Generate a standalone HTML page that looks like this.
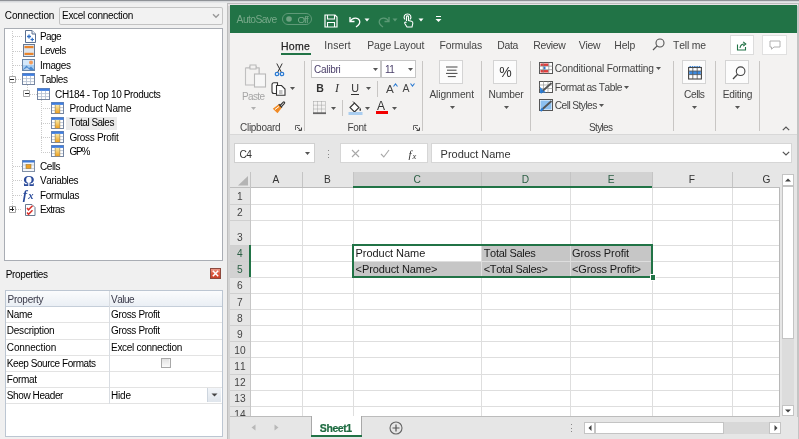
<!DOCTYPE html><html><head><meta charset="utf-8"><style>
html,body{margin:0;padding:0;width:799px;height:439px;overflow:hidden;background:#f0f0f0}
#root{position:absolute;left:0;top:0;width:799px;height:439px;overflow:hidden;filter:blur(0.3px);}
#root>div,#root>svg{position:absolute;box-sizing:border-box}
.t{white-space:pre;line-height:1;font-family:"Liberation Sans",sans-serif;font-kerning:none}
svg{overflow:visible}
</style></head><body><div id="root">
<div style="left:0.00px;top:0.00px;width:227.00px;height:439.00px;background:#f0f0f0;"></div>
<div style="left:0.00px;top:0.00px;width:799.00px;height:1.00px;background:#8f9297;"></div>
<div style="left:0.00px;top:1.00px;width:799.00px;height:1.00px;background:#d6d8db;"></div>
<div style="left:0.00px;top:2.00px;width:799.00px;height:1.00px;background:#e4e5e7;"></div>
<div class="t" style="left:4.80px;top:11.00px;font-size:10.000px;color:#000;letter-spacing:-0.109px;">Connection</div>
<div style="left:58.50px;top:6.50px;width:164.00px;height:18.00px;background:#f2f2f2;box-shadow:inset 0 0 0 1px #c3c3c3;border-radius:2px;"></div>
<div class="t" style="left:62.00px;top:11.00px;font-size:10.000px;color:#000;letter-spacing:-0.288px;">Excel connection</div>
<svg style="left:212.00px;top:13.00px;" width="8" height="6" viewBox="0 0 8 6"><path d="M1 1.2 L4 4.2 L7 1.2" fill="none" stroke="#9a9a9a" stroke-width="1.4"/></svg>
<div style="left:4.00px;top:28.00px;width:219.00px;height:233.00px;background:#fff;box-shadow:inset 0 0 0 1px #a9adb4;"></div>
<div style="left:12.00px;top:31.00px;width:1.00px;height:178.24px;background:repeating-linear-gradient(to bottom,#cacaca 0 1px,transparent 1px 2px);"></div>
<div style="left:13.00px;top:36.20px;width:9.00px;height:1.00px;background:repeating-linear-gradient(to right,#cacaca 0 1px,transparent 1px 2px);"></div>
<div style="left:13.00px;top:50.62px;width:9.00px;height:1.00px;background:repeating-linear-gradient(to right,#cacaca 0 1px,transparent 1px 2px);"></div>
<div style="left:13.00px;top:65.04px;width:9.00px;height:1.00px;background:repeating-linear-gradient(to right,#cacaca 0 1px,transparent 1px 2px);"></div>
<div style="left:16.00px;top:79.46px;width:6.00px;height:1.00px;background:repeating-linear-gradient(to right,#cacaca 0 1px,transparent 1px 2px);"></div>
<div style="left:13.00px;top:165.98px;width:9.00px;height:1.00px;background:repeating-linear-gradient(to right,#cacaca 0 1px,transparent 1px 2px);"></div>
<div style="left:13.00px;top:180.40px;width:9.00px;height:1.00px;background:repeating-linear-gradient(to right,#cacaca 0 1px,transparent 1px 2px);"></div>
<div style="left:13.00px;top:194.82px;width:9.00px;height:1.00px;background:repeating-linear-gradient(to right,#cacaca 0 1px,transparent 1px 2px);"></div>
<div style="left:16.00px;top:209.24px;width:6.00px;height:1.00px;background:repeating-linear-gradient(to right,#cacaca 0 1px,transparent 1px 2px);"></div>
<div style="left:26.50px;top:85.46px;width:1.00px;height:5.42px;background:repeating-linear-gradient(to bottom,#cacaca 0 1px,transparent 1px 2px);"></div>
<div style="left:30.00px;top:93.88px;width:7.00px;height:1.00px;background:repeating-linear-gradient(to right,#cacaca 0 1px,transparent 1px 2px);"></div>
<div style="left:40.50px;top:99.88px;width:1.00px;height:51.68px;background:repeating-linear-gradient(to bottom,#cacaca 0 1px,transparent 1px 2px);"></div>
<div style="left:41.00px;top:108.30px;width:10.00px;height:1.00px;background:repeating-linear-gradient(to right,#cacaca 0 1px,transparent 1px 2px);"></div>
<div style="left:41.00px;top:122.72px;width:10.00px;height:1.00px;background:repeating-linear-gradient(to right,#cacaca 0 1px,transparent 1px 2px);"></div>
<div style="left:41.00px;top:137.14px;width:10.00px;height:1.00px;background:repeating-linear-gradient(to right,#cacaca 0 1px,transparent 1px 2px);"></div>
<div style="left:41.00px;top:151.56px;width:10.00px;height:1.00px;background:repeating-linear-gradient(to right,#cacaca 0 1px,transparent 1px 2px);"></div>
<div style="left:8.80px;top:75.86px;width:7.20px;height:7.20px;background:#fff;box-shadow:inset 0 0 0 1px #a4a4a4;border-radius:1px;"></div>
<div style="left:10.40px;top:78.96px;width:4.00px;height:1.00px;background:#222;"></div>
<div style="left:23.30px;top:90.28px;width:7.20px;height:7.20px;background:#fff;box-shadow:inset 0 0 0 1px #a4a4a4;border-radius:1px;"></div>
<div style="left:24.90px;top:93.38px;width:4.00px;height:1.00px;background:#222;"></div>
<div style="left:8.80px;top:205.64px;width:7.20px;height:7.20px;background:#fff;box-shadow:inset 0 0 0 1px #a4a4a4;border-radius:1px;"></div>
<div style="left:10.40px;top:208.74px;width:4.00px;height:1.00px;background:#222;"></div>
<div style="left:11.90px;top:207.24px;width:1.00px;height:4.00px;background:#222;"></div>
<svg style="left:23.50px;top:30.00px;" width="12" height="13" viewBox="0 0 12 13"><path d="M1.5 0.5H8L11.5 4V12.5H1.5Z" fill="#fff" stroke="#5d7190"/><path d="M8 0.5V4H11.5" fill="#e8eef6" stroke="#5d7190"/><path d="M3 6.5H7M5 4.5V8.5" stroke="#2f6fc6" stroke-width="1.3"/><path d="M6.5 9.5H10M8.25 7.8V11.2" stroke="#2f6fc6" stroke-width="1.2"/></svg>
<svg style="left:23.00px;top:44.00px;" width="12" height="13" viewBox="0 0 12 13"><rect x="0.5" y="0.5" width="11" height="12" fill="#dde5ee" stroke="#6a7a92"/><rect x="1.5" y="2" width="9" height="2.2" fill="#e8842c"/><rect x="1.5" y="8.8" width="9" height="2.2" fill="#e8842c"/></svg>
<svg style="left:22.00px;top:58.50px;" width="13" height="12" viewBox="0 0 13 12"><rect x="0.5" y="0.5" width="12" height="11" fill="#a8cdf0" stroke="#6a86a8"/><rect x="1" y="1" width="11" height="5" fill="#d4e8fa"/><circle cx="9" cy="3.6" r="2" fill="#f39c5a"/><path d="M1 10.5L4.5 6.5L7 9L9 7.5L12 10.5V11H1Z" fill="#4a8ad0"/><path d="M1 11L5 8.5L8 11Z" fill="#ffffff" opacity="0.6"/></svg>
<svg style="left:22.30px;top:73.46px;" width="13" height="12" viewBox="0 0 13 12"><rect x="0.5" y="0.5" width="12" height="11" fill="#fff" stroke="#7585a0"/><rect x="0.5" y="0.5" width="12" height="2.4" fill="#3f7ee0"/><path d="M1 5.6H12M1 8.6H12M4.5 2.9V11M8.5 2.9V11" stroke="#b8c3d2" stroke-width="0.9"/></svg>
<svg style="left:37.20px;top:87.88px;" width="13" height="12" viewBox="0 0 13 12"><rect x="0.5" y="0.5" width="12" height="11" fill="#fff" stroke="#7585a0"/><rect x="0.5" y="0.5" width="12" height="2.4" fill="#3f7ee0"/><path d="M1 5.6H12M1 8.6H12M4.5 2.9V11M8.5 2.9V11" stroke="#b8c3d2" stroke-width="0.9"/></svg>
<svg style="left:51.00px;top:102.20px;" width="13" height="12" viewBox="0 0 13 12"><rect x="0.5" y="0.5" width="12" height="11" fill="#fff" stroke="#7585a0"/><rect x="0.5" y="0.5" width="12" height="2.4" fill="#3f7ee0"/><path d="M1 5.6H12M1 8.6H12M4.5 2.9V11M8.5 2.9V11" stroke="#b8c3d2" stroke-width="0.9"/><defs><linearGradient id="og" x1="0" y1="0" x2="0" y2="1"><stop offset="0" stop-color="#f8eaa8"/><stop offset="1" stop-color="#f0a01c"/></linearGradient></defs><rect x="4.2" y="2.9" width="4.6" height="8.3" fill="url(#og)"/><path d="M4.2 2.9V11.2M8.8 2.9V11.2" stroke="#a08040" stroke-width="0.6"/></svg>
<svg style="left:51.00px;top:116.62px;" width="13" height="12" viewBox="0 0 13 12"><rect x="0.5" y="0.5" width="12" height="11" fill="#fff" stroke="#7585a0"/><rect x="0.5" y="0.5" width="12" height="2.4" fill="#3f7ee0"/><path d="M1 5.6H12M1 8.6H12M4.5 2.9V11M8.5 2.9V11" stroke="#b8c3d2" stroke-width="0.9"/><defs><linearGradient id="og" x1="0" y1="0" x2="0" y2="1"><stop offset="0" stop-color="#f8eaa8"/><stop offset="1" stop-color="#f0a01c"/></linearGradient></defs><rect x="4.2" y="2.9" width="4.6" height="8.3" fill="url(#og)"/><path d="M4.2 2.9V11.2M8.8 2.9V11.2" stroke="#a08040" stroke-width="0.6"/></svg>
<svg style="left:51.00px;top:131.04px;" width="13" height="12" viewBox="0 0 13 12"><rect x="0.5" y="0.5" width="12" height="11" fill="#fff" stroke="#7585a0"/><rect x="0.5" y="0.5" width="12" height="2.4" fill="#3f7ee0"/><path d="M1 5.6H12M1 8.6H12M4.5 2.9V11M8.5 2.9V11" stroke="#b8c3d2" stroke-width="0.9"/><defs><linearGradient id="og" x1="0" y1="0" x2="0" y2="1"><stop offset="0" stop-color="#f8eaa8"/><stop offset="1" stop-color="#f0a01c"/></linearGradient></defs><rect x="4.2" y="2.9" width="4.6" height="8.3" fill="url(#og)"/><path d="M4.2 2.9V11.2M8.8 2.9V11.2" stroke="#a08040" stroke-width="0.6"/></svg>
<svg style="left:51.00px;top:145.46px;" width="13" height="12" viewBox="0 0 13 12"><rect x="0.5" y="0.5" width="12" height="11" fill="#fff" stroke="#7585a0"/><rect x="0.5" y="0.5" width="12" height="2.4" fill="#3f7ee0"/><path d="M1 5.6H12M1 8.6H12M4.5 2.9V11M8.5 2.9V11" stroke="#b8c3d2" stroke-width="0.9"/><defs><linearGradient id="og" x1="0" y1="0" x2="0" y2="1"><stop offset="0" stop-color="#f8eaa8"/><stop offset="1" stop-color="#f0a01c"/></linearGradient></defs><rect x="4.2" y="2.9" width="4.6" height="8.3" fill="url(#og)"/><path d="M4.2 2.9V11.2M8.8 2.9V11.2" stroke="#a08040" stroke-width="0.6"/></svg>
<svg style="left:22.30px;top:159.98px;" width="13" height="12" viewBox="0 0 13 12"><rect x="0.5" y="0.5" width="12" height="11" fill="#f4f6f9" stroke="#7f8fa6"/><rect x="0.5" y="0.5" width="12" height="2" fill="#3b78d8"/><path d="M1 5H12M1 8.5H12" stroke="#c8d0dc"/><rect x="4" y="4.5" width="5" height="4" fill="#eea023" stroke="#9a7a3a" stroke-width="0.6"/></svg>
<div class="t" style="left:23.20px;top:175.00px;font-size:14.000px;color:#2a4a9a;font-weight:bold;font-family:'Liberation Serif';">Ω</div>
<div class="t" style="left:22.80px;top:188.00px;font-size:13.000px;color:#2a4a9a;font-weight:bold;font-family:'Liberation Serif';font-style:italic;">f</div>
<div class="t" style="left:28.20px;top:191.00px;font-size:10.500px;color:#2a4a9a;font-weight:bold;font-family:'Liberation Serif';font-style:italic;">x</div>
<svg style="left:23.50px;top:203.50px;" width="12" height="12" viewBox="0 0 12 12"><path d="M1.5 0.5H8L11 3.5V11.5H1.5Z" fill="#fff" stroke="#6a7a90"/><path d="M3 4L4.5 5.8L8.5 1.8M3 8.5L4.5 10.3L8.5 6.3" fill="none" stroke="#d8302a" stroke-width="1.5"/></svg>
<div style="left:66.30px;top:116.50px;width:51.00px;height:13.00px;background:#ebebeb;"></div>
<div class="t" style="left:40.00px;top:32.00px;font-size:10.000px;color:#000;letter-spacing:-0.564px;">Page</div>
<div class="t" style="left:40.00px;top:46.00px;font-size:10.000px;color:#000;letter-spacing:-0.551px;">Levels</div>
<div class="t" style="left:40.00px;top:61.00px;font-size:10.000px;color:#000;letter-spacing:-0.365px;">Images</div>
<div class="t" style="left:40.00px;top:75.00px;font-size:10.000px;color:#000;letter-spacing:-0.402px;">Tables</div>
<div class="t" style="left:55.00px;top:90.00px;font-size:10.000px;color:#000;letter-spacing:-0.343px;">CH184 - Top 10 Products</div>
<div class="t" style="left:69.40px;top:104.00px;font-size:10.000px;color:#000;letter-spacing:-0.160px;">Product Name</div>
<div class="t" style="left:69.40px;top:118.00px;font-size:10.000px;color:#000;letter-spacing:-0.502px;">Total Sales</div>
<div class="t" style="left:69.40px;top:133.00px;font-size:10.000px;color:#000;letter-spacing:-0.316px;">Gross Profit</div>
<div class="t" style="left:69.40px;top:147.00px;font-size:10.000px;color:#000;letter-spacing:-1.113px;">GP%</div>
<div class="t" style="left:40.00px;top:162.00px;font-size:10.000px;color:#000;letter-spacing:-0.445px;">Cells</div>
<div class="t" style="left:40.00px;top:176.00px;font-size:10.000px;color:#000;letter-spacing:-0.388px;">Variables</div>
<div class="t" style="left:40.00px;top:191.00px;font-size:10.000px;color:#000;letter-spacing:-0.309px;">Formulas</div>
<div class="t" style="left:40.00px;top:205.00px;font-size:10.000px;color:#000;letter-spacing:-0.690px;">Extras</div>
<div class="t" style="left:5.70px;top:270.00px;font-size:10.000px;color:#000;letter-spacing:-0.358px;">Properties</div>
<svg style="left:210.00px;top:268.00px;" width="11" height="11" viewBox="0 0 11 11"><defs><linearGradient id="rg" x1="0" y1="0" x2="0" y2="1"><stop offset="0" stop-color="#f0a090"/><stop offset="0.5" stop-color="#dc5a40"/><stop offset="1" stop-color="#c83c24"/></linearGradient></defs><rect x="0.5" y="0.5" width="10" height="10" fill="url(#rg)" stroke="#8c4a3e"/><path d="M2.8 2.8L8.2 8.2M8.2 2.8L2.8 8.2" stroke="#fff" stroke-width="1.5"/></svg>
<div style="left:4.50px;top:289.50px;width:218.50px;height:147.00px;background:#fff;box-shadow:inset 0 0 0 1px #bcc6d2;"></div>
<div style="left:5.50px;top:290.50px;width:216.50px;height:16.00px;background:linear-gradient(#fbfcfd,#e9eef4);"></div>
<div style="left:5.50px;top:306.00px;width:216.50px;height:1.00px;background:#c5ced9;"></div>
<div style="left:5.50px;top:322.40px;width:216.50px;height:1.00px;background:#e3e3e3;"></div>
<div style="left:5.50px;top:338.60px;width:216.50px;height:1.00px;background:#e3e3e3;"></div>
<div style="left:5.50px;top:354.70px;width:216.50px;height:1.00px;background:#e3e3e3;"></div>
<div style="left:5.50px;top:370.90px;width:216.50px;height:1.00px;background:#e3e3e3;"></div>
<div style="left:5.50px;top:387.00px;width:216.50px;height:1.00px;background:#e3e3e3;"></div>
<div style="left:5.50px;top:403.20px;width:216.50px;height:1.00px;background:#e3e3e3;"></div>
<div style="left:108.70px;top:290.50px;width:1.00px;height:113.00px;background:#d9dde2;"></div>
<div class="t" style="left:7.50px;top:295.00px;font-size:10.000px;color:#3a3a4a;letter-spacing:-0.249px;">Property</div>
<div class="t" style="left:111.00px;top:295.00px;font-size:10.000px;color:#3a3a4a;letter-spacing:-0.515px;">Value</div>
<div class="t" style="left:6.80px;top:310.00px;font-size:10.000px;color:#000;letter-spacing:-0.294px;">Name</div>
<div class="t" style="left:111.00px;top:310.00px;font-size:10.000px;color:#000;letter-spacing:-0.341px;">Gross Profit</div>
<div class="t" style="left:6.80px;top:326.00px;font-size:10.000px;color:#000;letter-spacing:-0.229px;">Description</div>
<div class="t" style="left:111.00px;top:326.00px;font-size:10.000px;color:#000;letter-spacing:-0.341px;">Gross Profit</div>
<div class="t" style="left:6.80px;top:343.00px;font-size:10.000px;color:#000;letter-spacing:-0.129px;">Connection</div>
<div class="t" style="left:111.00px;top:343.00px;font-size:10.000px;color:#000;letter-spacing:-0.288px;">Excel connection</div>
<div class="t" style="left:6.80px;top:359.00px;font-size:10.000px;color:#000;letter-spacing:-0.446px;">Keep Source Formats</div>
<div class="t" style="left:6.80px;top:375.00px;font-size:10.000px;color:#000;letter-spacing:-0.278px;">Format</div>
<div class="t" style="left:6.80px;top:391.00px;font-size:10.000px;color:#000;letter-spacing:-0.399px;">Show Header</div>
<div class="t" style="left:111.00px;top:391.00px;font-size:10.000px;color:#000;letter-spacing:-0.167px;">Hide</div>
<div style="left:160.50px;top:357.80px;width:10.00px;height:10.00px;background:#f4f4f4;box-shadow:inset 0 0 0 1px #a8a8a8;"></div>
<div style="left:161.70px;top:359.00px;width:7.60px;height:7.60px;background:linear-gradient(#e2e2e2,#fbfbfb);"></div>
<div style="left:206.80px;top:388.30px;width:14.40px;height:13.90px;background:linear-gradient(#f2f5f9,#dfe5ec);box-shadow:inset 1px 0 0 #cdd5de;"></div>
<svg style="left:210.50px;top:393.00px;" width="7" height="4" viewBox="0 0 7 4"><path d="M0.5 0.5H6.5L3.5 3.5Z" fill="#444"/></svg>
<div style="left:227.00px;top:3.00px;width:572.00px;height:436.00px;background:#e6e6e6;"></div>
<div style="left:227.00px;top:3.00px;width:572.00px;height:1.00px;background:#bdbdbd;"></div>
<div style="left:227.00px;top:3.00px;width:1.00px;height:436.00px;background:#bdbdbd;"></div>
<div style="left:228.00px;top:4.00px;width:2.00px;height:435.00px;background:#d4d4d4;"></div>
<div style="left:796.80px;top:3.00px;width:2.20px;height:436.00px;background:#c4c4c4;"></div>
<div style="left:228.00px;top:4.00px;width:570.00px;height:1.50px;background:#e8e3e6;"></div>
<div style="left:229.80px;top:5.40px;width:567.00px;height:27.60px;background:#217346;"></div>
<!--EXCEL-->
<div class="t" style="left:236.60px;top:15.00px;font-size:10.300px;color:#78a98a;letter-spacing:-0.583px;">AutoSave</div>
<div style="left:282.40px;top:12.60px;width:30.00px;height:12.30px;border:1px solid #5f9a78;border-radius:7px;box-sizing:border-box;"></div>
<svg style="left:285.50px;top:15.50px;" width="6" height="6" viewBox="0 0 6 6"><circle cx="3" cy="3" r="2.8" fill="#6fa283"/></svg>
<div class="t" style="left:297.40px;top:15.00px;font-size:9.800px;color:#78a98a;letter-spacing:-0.889px;">Off</div>
<svg style="left:324.00px;top:13.50px;" width="14" height="14" viewBox="0 0 14 14"><path d="M1 1H11L13 3V13H1Z" fill="none" stroke="#fff" stroke-width="1.2"/><path d="M3.5 1V5H10.5V1" fill="none" stroke="#fff" stroke-width="1.1"/><path d="M3.5 13V8.5H10.5V13" fill="none" stroke="#fff" stroke-width="1.1"/></svg>
<svg style="left:347.50px;top:13.50px;" width="14" height="14" viewBox="0 0 14 14"><path d="M2 3V7.5H6.5" fill="none" stroke="#fff" stroke-width="1.3"/><path d="M2.3 7.2C4.5 3.2 10 3.2 11.5 6.5C12.6 9 11 11 8 13" fill="none" stroke="#fff" stroke-width="1.3"/></svg>
<svg style="left:363.50px;top:17.50px;" width="6" height="4" viewBox="0 0 6 4"><path d="M0.5 0.5H5.5L3 3.5Z" fill="#fff"/></svg>
<svg style="left:376.50px;top:13.50px;" width="14" height="14" viewBox="0 0 14 14"><path d="M12 3V7.5H7.5" fill="none" stroke="#5c9a76" stroke-width="1.3"/><path d="M11.7 7.2C9.5 3.2 4 3.2 2.5 6.5C1.4 9 3 11 6 13" fill="none" stroke="#5c9a76" stroke-width="1.3"/></svg>
<svg style="left:391.50px;top:17.50px;" width="6" height="4" viewBox="0 0 6 4"><path d="M0.5 0.5H5.5L3 3.5Z" fill="#5c9a76"/></svg>
<svg style="left:402.00px;top:13.00px;" width="12" height="15" viewBox="0 0 12 15"><path d="M3 6.5C1 4 2.5 1 5.5 1C8.5 1 10 4 8 6.5" fill="none" stroke="#fff" stroke-width="1.1"/><path d="M4.5 8V3.8C4.5 2.6 6.5 2.6 6.5 3.8V7.5L9.5 8.3C10.8 8.7 11 9.5 10.8 10.5L10 14H5L2.8 10.5C2.3 9.5 3.4 8.6 4.5 9.5" fill="none" stroke="#fff" stroke-width="1.1"/></svg>
<svg style="left:418.00px;top:17.50px;" width="6" height="4" viewBox="0 0 6 4"><path d="M0.5 0.5H5.5L3 3.5Z" fill="#fff"/></svg>
<svg style="left:434.50px;top:15.00px;" width="7" height="8" viewBox="0 0 7 8"><path d="M1 1.5H6" stroke="#fff" stroke-width="1"/><path d="M0.5 4H6.5L3.5 7Z" fill="#fff"/></svg>
<div style="left:229.80px;top:33.00px;width:567.00px;height:101.00px;background:#f3f2f1;"></div>
<div class="t" style="left:281.00px;top:41.00px;font-size:10.500px;color:#262626;letter-spacing:0.248px;-webkit-text-stroke:0.25px #262626;">Home</div>
<div style="left:281.00px;top:53.30px;width:30.00px;height:2.00px;background:#217346;"></div>
<div class="t" style="left:324.30px;top:41.00px;font-size:10.400px;color:#444;letter-spacing:0.082px;">Insert</div>
<div class="t" style="left:367.30px;top:41.00px;font-size:10.400px;color:#444;letter-spacing:-0.128px;">Page Layout</div>
<div class="t" style="left:439.50px;top:41.00px;font-size:10.400px;color:#444;letter-spacing:-0.080px;">Formulas</div>
<div class="t" style="left:497.30px;top:41.00px;font-size:10.400px;color:#444;letter-spacing:-0.317px;">Data</div>
<div class="t" style="left:533.30px;top:41.00px;font-size:10.400px;color:#444;letter-spacing:-0.333px;">Review</div>
<div class="t" style="left:578.70px;top:41.00px;font-size:10.400px;color:#444;letter-spacing:-0.235px;">View</div>
<div class="t" style="left:614.30px;top:41.00px;font-size:10.400px;color:#444;letter-spacing:-0.122px;">Help</div>
<div class="t" style="left:673.00px;top:41.00px;font-size:10.400px;color:#444;letter-spacing:-0.156px;">Tell me</div>
<svg style="left:651.50px;top:38.00px;" width="13" height="13" viewBox="0 0 13 13"><circle cx="8" cy="5" r="4" fill="none" stroke="#555" stroke-width="1.1"/><path d="M5.2 7.8L1 12" stroke="#555" stroke-width="1.2"/></svg>
<div style="left:729.50px;top:35.00px;width:24.50px;height:19.50px;background:#fff;box-shadow:inset 0 0 0 1px #dcdcdc;"></div>
<svg style="left:736.00px;top:39.50px;" width="12" height="11" viewBox="0 0 12 11"><path d="M1.5 4.5V10H9.5V7" fill="none" stroke="#217346" stroke-width="1.1"/><path d="M4 8C4.3 5.5 6 4 8.5 4" fill="none" stroke="#217346" stroke-width="1.1"/><path d="M7.2 1.8L9.8 4L7.2 6.2" fill="none" stroke="#217346" stroke-width="1.1"/></svg>
<div style="left:761.60px;top:35.00px;width:25.50px;height:19.50px;background:#fff;box-shadow:inset 0 0 0 1px #e0e0e0;"></div>
<svg style="left:768.50px;top:40.00px;" width="12" height="10" viewBox="0 0 12 10"><path d="M1 1H11V7H5L2.5 9.2V7H1Z" fill="none" stroke="#b0b0b0" stroke-width="1"/></svg>
<div style="left:229.80px;top:133.80px;width:567.00px;height:1.20px;background:#d8d8d8;"></div>
<svg style="left:243.50px;top:63.50px;" width="23" height="24" viewBox="0 0 23 24"><path d="M2 4H6V2.5H12V4H15V10" fill="none" stroke="#b8b8b8" stroke-width="1.2"/><rect x="1.5" y="4" width="13.5" height="17" fill="#f3f2f1" stroke="#c0c0c0" stroke-width="1.1"/><rect x="6" y="1" width="6" height="4" fill="#f3f2f1" stroke="#b8b8b8"/><rect x="10.5" y="10" width="11" height="13" fill="#f7f7f7" stroke="#b8b8b8" stroke-width="1.1"/></svg>
<div class="t" style="left:242.00px;top:92.00px;font-size:10.000px;color:#a6a6a6;letter-spacing:-0.634px;">Paste</div>
<svg style="left:251.00px;top:106.80px;" width="5" height="3" viewBox="0 0 5 3"><path d="M0 0H5L2.5 3Z" fill="#b0b0b0"/></svg>
<svg style="left:273.50px;top:62.50px;" width="11" height="14" viewBox="0 0 11 14"><path d="M2.8 0.5L7.2 9M8.2 0.5L3.8 9" stroke="#333" stroke-width="1"/><circle cx="3" cy="11" r="1.7" fill="#fff" stroke="#2a7ad2" stroke-width="1.3"/><circle cx="8" cy="11" r="1.7" fill="#fff" stroke="#2a7ad2" stroke-width="1.3"/></svg>
<svg style="left:271.00px;top:81.50px;" width="16" height="14" viewBox="0 0 16 14"><path d="M3 0.8H6.5V11.5H3C1.8 11.5 1 10.7 1 9.5V2.8C1 1.6 1.8 0.8 3 0.8Z" fill="#fff" stroke="#333" stroke-width="1.1"/><path d="M5.5 3.5H10.5L14 7V13.3H5.5Z" fill="#fff" stroke="#333" stroke-width="1.1"/><path d="M8 9H11.5M8 11H11.5" stroke="#666" stroke-width="0.8"/></svg>
<svg style="left:289.50px;top:87.00px;" width="5" height="3" viewBox="0 0 5 3"><path d="M0 0H5L2.5 3Z" fill="#555"/></svg>
<svg style="left:272.00px;top:100.00px;" width="14" height="14" viewBox="0 0 14 14"><path d="M8 5.5L11.3 2.2C12 1.5 13.2 2.6 12.5 3.4L9.3 6.8" fill="none" stroke="#333" stroke-width="1.1"/><path d="M0.8 8.8L6.8 4.2L10 7.5L5.5 13.3Z" fill="#f08a24"/><path d="M6.8 4.2L10 7.5" stroke="#333" stroke-width="1.2"/><path d="M3 9.5L7 6.5" stroke="#fff" stroke-width="1"/></svg>
<div class="t" style="left:240.00px;top:123.00px;font-size:10.000px;color:#444;letter-spacing:-0.278px;">Clipboard</div>
<svg style="left:294.50px;top:125.00px;" width="7" height="6" viewBox="0 0 7 6"><path d="M0.5 5V0.5H5" fill="none" stroke="#666" stroke-width="1"/><path d="M2 2L6 5.5M3.5 5.5H6.5V2.5" fill="none" stroke="#444" stroke-width="1"/></svg>
<div style="left:304.40px;top:61.00px;width:1.00px;height:69.60px;background:#c8c6c4;"></div>
<div style="left:311.20px;top:60.40px;width:70.10px;height:17.80px;background:#fff;box-shadow:inset 0 0 0 1px #c6c6c6;"></div>
<div class="t" style="left:314.00px;top:65.00px;font-size:10.000px;color:#4a3f6a;letter-spacing:-0.249px;">Calibri</div>
<svg style="left:373.00px;top:67.80px;" width="5" height="3" viewBox="0 0 5 3"><path d="M0 0H5L2.5 3Z" fill="#555"/></svg>
<div style="left:380.80px;top:60.40px;width:35.30px;height:17.80px;background:#fff;box-shadow:inset 0 0 0 1px #c6c6c6;"></div>
<div class="t" style="left:385.00px;top:65.00px;font-size:10.000px;color:#4a3f6a;letter-spacing:-1.412px;">11</div>
<svg style="left:407.80px;top:67.80px;" width="5" height="3" viewBox="0 0 5 3"><path d="M0 0H5L2.5 3Z" fill="#555"/></svg>
<div class="t" style="left:316.30px;top:83.00px;font-size:10.524px;color:#333;font-weight:bold;">B</div>
<div class="t" style="left:335.00px;top:82.00px;font-size:12.000px;color:#333;font-family:'Liberation Serif';font-style:italic;">I</div>
<div class="t" style="left:351.30px;top:83.00px;font-size:10.801px;color:#333;">U</div>
<div style="left:351.30px;top:94.00px;width:8.00px;height:1.00px;background:#333;"></div>
<svg style="left:365.50px;top:86.50px;" width="5" height="3" viewBox="0 0 5 3"><path d="M0 0H5L2.5 3Z" fill="#555"/></svg>
<div style="left:377.40px;top:81.00px;width:1.00px;height:15.60px;background:#c8c6c4;"></div>
<div class="t" style="left:386.00px;top:83.00px;font-size:11.694px;color:#444;">A</div>
<svg style="left:392.50px;top:82.50px;" width="5" height="4" viewBox="0 0 5 4"><path d="M0.5 3.5L2.5 1L4.5 3.5" fill="none" stroke="#2a7ad2" stroke-width="1.1"/></svg>
<div class="t" style="left:402.60px;top:84.00px;font-size:10.495px;color:#444;">A</div>
<svg style="left:409.50px;top:83.00px;" width="5" height="4" viewBox="0 0 5 4"><path d="M0.5 0.5L2.5 3L4.5 0.5" fill="none" stroke="#2a7ad2" stroke-width="1.1"/></svg>
<svg style="left:313.00px;top:101.00px;" width="14" height="14" viewBox="0 0 14 14"><path d="M0.5 0.5H12.5V11.5M0.5 0.5V11.5M4.5 0.5V11.5M8.5 0.5V11.5M0.5 4.2H12.5M0.5 8H12.5" fill="none" stroke="#9a9a9a" stroke-width="0.9" stroke-dasharray="1 1"/><rect x="0" y="11.3" width="13" height="1.8" fill="#666"/></svg>
<svg style="left:330.80px;top:106.50px;" width="5" height="3" viewBox="0 0 5 3"><path d="M0 0H5L2.5 3Z" fill="#555"/></svg>
<div style="left:342.20px;top:99.50px;width:1.00px;height:16.50px;background:#c8c6c4;"></div>
<svg style="left:347.50px;top:100.50px;" width="15" height="15" viewBox="0 0 15 15"><path d="M2 6.5L6.5 2L11 6.5L6.5 11Z" fill="#fff" stroke="#333" stroke-width="1.1"/><path d="M6.5 2L5 0.5" stroke="#333"/><path d="M12 6.5C13 8 13.5 9 12.5 9.8C11.6 10.4 11 9 12 6.5Z" fill="#333"/><rect x="0.5" y="11" width="14" height="3" fill="#a9cdf0"/></svg>
<svg style="left:365.20px;top:106.50px;" width="5" height="3" viewBox="0 0 5 3"><path d="M0 0H5L2.5 3Z" fill="#555"/></svg>
<div class="t" style="left:377.00px;top:100.00px;font-size:12.000px;color:#333;">A</div>
<div style="left:375.50px;top:111.00px;width:12.50px;height:3.00px;background:#f20000;"></div>
<svg style="left:392.30px;top:106.50px;" width="5" height="3" viewBox="0 0 5 3"><path d="M0 0H5L2.5 3Z" fill="#555"/></svg>
<div class="t" style="left:347.40px;top:123.00px;font-size:10.000px;color:#444;letter-spacing:-0.302px;">Font</div>
<svg style="left:412.50px;top:125.00px;" width="7" height="6" viewBox="0 0 7 6"><path d="M0.5 5V0.5H5" fill="none" stroke="#666" stroke-width="1"/><path d="M2 2L6 5.5M3.5 5.5H6.5V2.5" fill="none" stroke="#444" stroke-width="1"/></svg>
<div style="left:422.20px;top:61.00px;width:1.00px;height:69.60px;background:#c8c6c4;"></div>
<div style="left:439.00px;top:60.20px;width:23.90px;height:24.10px;background:#fcfcfc;box-shadow:inset 0 0 0 1px #d4d4d4;"></div>
<svg style="left:445.00px;top:66.00px;" width="13" height="12" viewBox="0 0 13 12"><path d="M1 1H12.5M2 4.2H11.5M1 7.4H12.5M2.8 10.6H10.8" stroke="#444" stroke-width="1"/></svg>
<div class="t" style="left:429.40px;top:90.00px;font-size:10.200px;color:#444;letter-spacing:-0.084px;">Alignment</div>
<svg style="left:449.50px;top:105.50px;" width="5" height="3" viewBox="0 0 5 3"><path d="M0 0H5L2.5 3Z" fill="#555"/></svg>
<div style="left:481.30px;top:61.00px;width:1.00px;height:69.60px;background:#c8c6c4;"></div>
<div style="left:493.00px;top:60.20px;width:23.80px;height:24.10px;background:#fcfcfc;box-shadow:inset 0 0 0 1px #d4d4d4;"></div>
<div class="t" style="left:499.20px;top:65.00px;font-size:14.000px;color:#333;letter-spacing:-0.048px;">%</div>
<div class="t" style="left:488.50px;top:90.00px;font-size:10.200px;color:#444;letter-spacing:-0.230px;">Number</div>
<svg style="left:503.50px;top:105.50px;" width="5" height="3" viewBox="0 0 5 3"><path d="M0 0H5L2.5 3Z" fill="#555"/></svg>
<div style="left:530.20px;top:61.00px;width:1.00px;height:69.60px;background:#c8c6c4;"></div>
<svg style="left:538.50px;top:62.30px;" width="14" height="12" viewBox="0 0 14 12"><rect x="0.5" y="0.5" width="13" height="11" fill="#fff" stroke="#555"/><rect x="1.5" y="1.5" width="8" height="2.5" fill="#e23a3a"/><rect x="1.5" y="8" width="8" height="2.5" fill="#e23a3a"/><rect x="4.5" y="4.5" width="2" height="3" fill="#2a7ad2"/><path d="M0.5 4.2H13.5M0.5 7.7H13.5M4.2 0.5V11.5M9.8 0.5V11.5" stroke="#888" stroke-width="0.7"/></svg>
<div class="t" style="left:554.80px;top:64.00px;font-size:10.200px;color:#444;letter-spacing:-0.160px;">Conditional Formatting</div>
<svg style="left:656.20px;top:67.00px;" width="5" height="3" viewBox="0 0 5 3"><path d="M0 0H5L2.5 3Z" fill="#555"/></svg>
<svg style="left:538.50px;top:80.80px;" width="14" height="12" viewBox="0 0 14 12"><rect x="0.5" y="0.5" width="13" height="11" fill="#fff" stroke="#555"/><path d="M0.5 4H13.5M0.5 7.5H13.5M4.5 0.5V11.5M9 0.5V11.5" stroke="#999" stroke-width="0.7"/><path d="M1 11.5L1 6L7 11.5Z" fill="#3a8ae0"/><path d="M2.5 11L12.5 2" stroke="#555" stroke-width="1.8"/><path d="M1.5 12L4 9.5" stroke="#2a7ad2" stroke-width="2.2"/></svg>
<div class="t" style="left:554.80px;top:83.00px;font-size:10.200px;color:#444;letter-spacing:-0.471px;">Format as Table</div>
<svg style="left:624.30px;top:85.50px;" width="5" height="3" viewBox="0 0 5 3"><path d="M0 0H5L2.5 3Z" fill="#555"/></svg>
<svg style="left:538.50px;top:99.30px;" width="14" height="12" viewBox="0 0 14 12"><rect x="0.5" y="0.5" width="13" height="11" fill="#fff" stroke="#555"/><rect x="1.5" y="1.5" width="11" height="9" fill="#8cc0f0"/><path d="M2.5 11L12.5 2" stroke="#555" stroke-width="1.8"/><path d="M1.5 12L4 9.5" stroke="#2a7ad2" stroke-width="2.2"/></svg>
<div class="t" style="left:554.80px;top:101.00px;font-size:10.200px;color:#444;letter-spacing:-0.562px;">Cell Styles</div>
<svg style="left:599.10px;top:104.00px;" width="5" height="3" viewBox="0 0 5 3"><path d="M0 0H5L2.5 3Z" fill="#555"/></svg>
<div class="t" style="left:589.00px;top:123.00px;font-size:10.000px;color:#444;letter-spacing:-0.655px;">Styles</div>
<div style="left:672.50px;top:61.00px;width:1.00px;height:69.60px;background:#c8c6c4;"></div>
<div style="left:681.60px;top:60.20px;width:24.20px;height:24.10px;background:#fcfcfc;box-shadow:inset 0 0 0 1px #d4d4d4;"></div>
<svg style="left:687.70px;top:65.50px;" width="14" height="14" viewBox="0 0 14 14"><rect x="0.6" y="1.5" width="12.8" height="11.5" fill="#fff" stroke="#444" stroke-width="1.1"/><rect x="1.2" y="5" width="11.6" height="3.6" fill="#3b8ae0"/><path d="M0.6 5H13.4M0.6 8.6H13.4M4.8 1.5V13M9.2 1.5V13" stroke="#555" stroke-width="0.8"/><path d="M1.5 0.6H12.5" stroke="#2a7ad2" stroke-width="1" stroke-dasharray="1.5 0.8"/></svg>
<div class="t" style="left:684.00px;top:90.00px;font-size:10.200px;color:#444;letter-spacing:-0.434px;">Cells</div>
<svg style="left:691.70px;top:105.50px;" width="5" height="3" viewBox="0 0 5 3"><path d="M0 0H5L2.5 3Z" fill="#555"/></svg>
<div style="left:715.40px;top:61.00px;width:1.00px;height:69.60px;background:#c8c6c4;"></div>
<div style="left:725.20px;top:60.20px;width:23.80px;height:24.10px;background:#fcfcfc;box-shadow:inset 0 0 0 1px #d4d4d4;"></div>
<svg style="left:731.50px;top:65.50px;" width="14" height="14" viewBox="0 0 14 14"><circle cx="8.6" cy="5.2" r="4.3" fill="none" stroke="#444" stroke-width="1.1"/><path d="M5.6 8.3L1 13" stroke="#444" stroke-width="1.3"/></svg>
<div class="t" style="left:722.70px;top:90.00px;font-size:10.200px;color:#444;letter-spacing:-0.227px;">Editing</div>
<svg style="left:734.90px;top:105.50px;" width="5" height="3" viewBox="0 0 5 3"><path d="M0 0H5L2.5 3Z" fill="#555"/></svg>
<div style="left:759.20px;top:61.00px;width:1.00px;height:69.60px;background:#c8c6c4;"></div>
<svg style="left:781.50px;top:125.50px;" width="8" height="5" viewBox="0 0 8 5"><path d="M0.8 4.2L4 1L7.2 4.2" fill="none" stroke="#555" stroke-width="1.2"/></svg>
<div style="left:234.40px;top:143.20px;width:81.10px;height:20.10px;background:#fff;box-shadow:inset 0 0 0 1px #d0d0d0;"></div>
<div class="t" style="left:239.40px;top:150.00px;font-size:10.200px;color:#333;letter-spacing:-0.619px;">C4</div>
<svg style="left:304.50px;top:152.00px;" width="5" height="3" viewBox="0 0 5 3"><path d="M0 0H5L2.5 3Z" fill="#555"/></svg>
<div style="left:327.80px;top:150.00px;width:1.00px;height:1.00px;background:#888;"></div>
<div style="left:327.80px;top:153.50px;width:1.00px;height:1.00px;background:#888;"></div>
<div style="left:327.80px;top:157.00px;width:1.00px;height:1.00px;background:#888;"></div>
<div style="left:340.40px;top:143.20px;width:87.80px;height:20.10px;background:#fff;box-shadow:inset 0 0 0 1px #d6d6d6;"></div>
<svg style="left:351.00px;top:149.00px;" width="9" height="9" viewBox="0 0 9 9"><path d="M1 1L8 8M8 1L1 8" stroke="#a8a8a8" stroke-width="1.1"/></svg>
<svg style="left:379.50px;top:149.00px;" width="10" height="9" viewBox="0 0 10 9"><path d="M1 5L3.8 8L9 1" fill="none" stroke="#a8a8a8" stroke-width="1.1"/></svg>
<div class="t" style="left:408.50px;top:149.00px;font-size:11.000px;color:#333;font-family:'Liberation Serif';font-style:italic;">f</div>
<div class="t" style="left:412.50px;top:152.00px;font-size:8.500px;color:#333;font-family:'Liberation Serif';font-style:italic;">x</div>
<div style="left:431.30px;top:143.20px;width:360.50px;height:20.10px;background:#fff;box-shadow:inset 0 0 0 1px #d6d6d6;"></div>
<div class="t" style="left:440.60px;top:149.00px;font-size:11.000px;color:#333;letter-spacing:-0.026px;">Product Name</div>
<svg style="left:781.50px;top:151.00px;" width="8" height="5" viewBox="0 0 8 5"><path d="M0.8 0.8L4 4L7.2 0.8" fill="none" stroke="#555" stroke-width="1.2"/></svg>
<div style="left:250.30px;top:187.20px;width:529.00px;height:229.10px;background:#fff;"></div>
<div style="left:353.00px;top:260.80px;width:299.40px;height:16.10px;background:#c6c6c6;"></div>
<div style="left:481.40px;top:244.70px;width:171.00px;height:16.10px;background:#c6c6c6;"></div>
<div style="left:250.30px;top:203.50px;width:529.00px;height:1.00px;background:#dedede;"></div>
<div style="left:250.30px;top:219.90px;width:529.00px;height:1.00px;background:#dedede;"></div>
<div style="left:250.30px;top:244.70px;width:529.00px;height:1.00px;background:#dedede;"></div>
<div style="left:250.30px;top:260.80px;width:529.00px;height:1.00px;background:#dedede;"></div>
<div style="left:250.30px;top:276.90px;width:529.00px;height:1.00px;background:#dedede;"></div>
<div style="left:250.30px;top:293.00px;width:529.00px;height:1.00px;background:#dedede;"></div>
<div style="left:250.30px;top:309.10px;width:529.00px;height:1.00px;background:#dedede;"></div>
<div style="left:250.30px;top:325.20px;width:529.00px;height:1.00px;background:#dedede;"></div>
<div style="left:250.30px;top:341.30px;width:529.00px;height:1.00px;background:#dedede;"></div>
<div style="left:250.30px;top:357.40px;width:529.00px;height:1.00px;background:#dedede;"></div>
<div style="left:250.30px;top:373.50px;width:529.00px;height:1.00px;background:#dedede;"></div>
<div style="left:250.30px;top:389.60px;width:529.00px;height:1.00px;background:#dedede;"></div>
<div style="left:250.30px;top:405.70px;width:529.00px;height:1.00px;background:#dedede;"></div>
<div style="left:301.70px;top:187.20px;width:1.00px;height:229.10px;background:#dedede;"></div>
<div style="left:353.00px;top:187.20px;width:1.00px;height:229.10px;background:#dedede;"></div>
<div style="left:481.40px;top:187.20px;width:1.00px;height:229.10px;background:#dedede;"></div>
<div style="left:569.70px;top:187.20px;width:1.00px;height:229.10px;background:#dedede;"></div>
<div style="left:652.40px;top:187.20px;width:1.00px;height:229.10px;background:#dedede;"></div>
<div style="left:731.50px;top:187.20px;width:1.00px;height:229.10px;background:#dedede;"></div>
<div style="left:779.30px;top:187.20px;width:1.00px;height:230.10px;background:#b8b8b8;"></div>
<div style="left:229.80px;top:416.30px;width:550.50px;height:1.00px;background:#bcbcbc;"></div>
<div style="left:353.00px;top:172.30px;width:299.40px;height:15.00px;background:#d2d2d2;"></div>
<div style="left:250.30px;top:172.30px;width:1.00px;height:15.00px;background:#c4c4c4;"></div>
<div style="left:301.70px;top:172.30px;width:1.00px;height:15.00px;background:#c4c4c4;"></div>
<div style="left:353.00px;top:172.30px;width:1.00px;height:15.00px;background:#c4c4c4;"></div>
<div style="left:481.40px;top:172.30px;width:1.00px;height:15.00px;background:#c4c4c4;"></div>
<div style="left:569.70px;top:172.30px;width:1.00px;height:15.00px;background:#c4c4c4;"></div>
<div style="left:652.40px;top:172.30px;width:1.00px;height:15.00px;background:#c4c4c4;"></div>
<div style="left:731.50px;top:172.30px;width:1.00px;height:15.00px;background:#c4c4c4;"></div>
<div style="left:229.80px;top:187.20px;width:550.50px;height:1.00px;background:#bdbdbd;"></div>
<div style="left:353.00px;top:186.40px;width:299.40px;height:2.00px;background:#217346;"></div>
<svg style="left:238.00px;top:175.50px;" width="10" height="9.5" viewBox="0 0 10 9.5"><path d="M10 0V9.5H0Z" fill="#b4b4b4"/></svg>
<div class="t" style="left:272.60px;top:175.00px;font-size:10.200px;color:#333;">A</div>
<div class="t" style="left:323.95px;top:175.00px;font-size:10.200px;color:#333;">B</div>
<div class="t" style="left:413.52px;top:175.00px;font-size:10.200px;color:#2c5f45;">C</div>
<div class="t" style="left:521.87px;top:175.00px;font-size:10.200px;color:#2c5f45;">D</div>
<div class="t" style="left:607.65px;top:175.00px;font-size:10.200px;color:#2c5f45;">E</div>
<div class="t" style="left:688.83px;top:175.00px;font-size:10.200px;color:#333;">F</div>
<div class="t" style="left:762.43px;top:175.00px;font-size:10.200px;color:#333;">G</div>
<div style="left:229.80px;top:244.70px;width:20.50px;height:32.20px;background:#d2d2d2;"></div>
<div style="left:229.80px;top:203.50px;width:20.50px;height:1.00px;background:#d0d0d0;"></div>
<div style="left:229.80px;top:219.90px;width:20.50px;height:1.00px;background:#d0d0d0;"></div>
<div style="left:229.80px;top:244.70px;width:20.50px;height:1.00px;background:#d0d0d0;"></div>
<div style="left:229.80px;top:260.80px;width:20.50px;height:1.00px;background:#d0d0d0;"></div>
<div style="left:229.80px;top:276.90px;width:20.50px;height:1.00px;background:#d0d0d0;"></div>
<div style="left:229.80px;top:293.00px;width:20.50px;height:1.00px;background:#d0d0d0;"></div>
<div style="left:229.80px;top:309.10px;width:20.50px;height:1.00px;background:#d0d0d0;"></div>
<div style="left:229.80px;top:325.20px;width:20.50px;height:1.00px;background:#d0d0d0;"></div>
<div style="left:229.80px;top:341.30px;width:20.50px;height:1.00px;background:#d0d0d0;"></div>
<div style="left:229.80px;top:357.40px;width:20.50px;height:1.00px;background:#d0d0d0;"></div>
<div style="left:229.80px;top:373.50px;width:20.50px;height:1.00px;background:#d0d0d0;"></div>
<div style="left:229.80px;top:389.60px;width:20.50px;height:1.00px;background:#d0d0d0;"></div>
<div style="left:229.80px;top:405.70px;width:20.50px;height:1.00px;background:#d0d0d0;"></div>
<div style="left:229.80px;top:431.30px;width:20.50px;height:1.00px;background:#d0d0d0;"></div>
<div class="t" style="left:237.06px;top:192.00px;font-size:10.200px;color:#444;">1</div>
<div class="t" style="left:237.06px;top:208.00px;font-size:10.200px;color:#444;">2</div>
<div class="t" style="left:237.06px;top:233.00px;font-size:10.200px;color:#444;">3</div>
<div class="t" style="left:237.06px;top:249.00px;font-size:10.200px;color:#2c5f45;">4</div>
<div class="t" style="left:237.06px;top:265.00px;font-size:10.200px;color:#2c5f45;">5</div>
<div class="t" style="left:237.06px;top:281.00px;font-size:10.200px;color:#444;">6</div>
<div class="t" style="left:237.06px;top:298.00px;font-size:10.200px;color:#444;">7</div>
<div class="t" style="left:237.06px;top:314.00px;font-size:10.200px;color:#444;">8</div>
<div class="t" style="left:237.06px;top:330.00px;font-size:10.200px;color:#444;">9</div>
<div class="t" style="left:234.23px;top:346.00px;font-size:10.200px;color:#444;">10</div>
<div class="t" style="left:234.23px;top:362.00px;font-size:10.200px;color:#444;">11</div>
<div class="t" style="left:234.23px;top:378.00px;font-size:10.200px;color:#444;">12</div>
<div class="t" style="left:234.23px;top:394.00px;font-size:10.200px;color:#444;">13</div>
<div class="t" style="left:234.23px;top:410.00px;font-size:10.200px;color:#444;">14</div>
<div style="left:250.00px;top:187.20px;width:1.00px;height:229.10px;background:#c6c6c6;"></div>
<div style="left:249.30px;top:244.70px;width:2.00px;height:32.20px;background:#217346;"></div>
<div style="left:229.80px;top:417.30px;width:568.00px;height:21.70px;background:#e6e6e6;"></div>
<div style="left:229.80px;top:416.30px;width:550.50px;height:1.00px;background:#bcbcbc;"></div>
<div style="left:352.40px;top:244.00px;width:301.00px;height:33.80px;border:2px solid #217346;box-sizing:border-box;"></div>
<div style="left:650.50px;top:275.30px;width:4.50px;height:4.50px;background:#217346;outline:1px solid #fff;"></div>
<div class="t" style="left:355.60px;top:248.00px;font-size:11.000px;color:#1a1a1a;letter-spacing:-0.059px;">Product Name</div>
<div class="t" style="left:355.60px;top:264.00px;font-size:11.000px;color:#1a1a1a;letter-spacing:-0.111px;">&lt;Product Name&gt;</div>
<div class="t" style="left:483.70px;top:248.00px;font-size:11.000px;color:#1a1a1a;letter-spacing:-0.293px;">Total Sales</div>
<div class="t" style="left:483.70px;top:264.00px;font-size:11.000px;color:#1a1a1a;letter-spacing:-0.313px;">&lt;Total Sales&gt;</div>
<div class="t" style="left:572.00px;top:248.00px;font-size:11.000px;color:#1a1a1a;letter-spacing:-0.089px;">Gross Profit</div>
<div class="t" style="left:572.00px;top:264.00px;font-size:11.000px;color:#1a1a1a;letter-spacing:-0.144px;">&lt;Gross Profit&gt;</div>
<div style="left:782.30px;top:174.00px;width:11.30px;height:11.50px;background:#fff;box-shadow:inset 0 0 0 1px #c4c4c4;"></div>
<svg style="left:785.00px;top:177.50px;" width="6" height="4" viewBox="0 0 6 4"><path d="M0 3.5H6L3 0.5Z" fill="#444"/></svg>
<div style="left:782.30px;top:185.50px;width:11.30px;height:153.50px;background:#fff;box-shadow:inset 0 0 0 1px #c4c4c4;"></div>
<div style="left:782.30px;top:339.00px;width:11.30px;height:66.40px;background:#dcdcdc;"></div>
<div style="left:782.30px;top:405.40px;width:11.30px;height:10.80px;background:#fff;box-shadow:inset 0 0 0 1px #c4c4c4;"></div>
<svg style="left:785.00px;top:409.00px;" width="6" height="4" viewBox="0 0 6 4"><path d="M0 0.5H6L3 3.5Z" fill="#444"/></svg>
<svg style="left:251.00px;top:424.00px;" width="5" height="7" viewBox="0 0 5 7"><path d="M4.5 0.5V6.5L0.5 3.5Z" fill="#b8b8b8"/></svg>
<svg style="left:274.00px;top:424.00px;" width="5" height="7" viewBox="0 0 5 7"><path d="M0.5 0.5V6.5L4.5 3.5Z" fill="#b8b8b8"/></svg>
<div style="left:310.50px;top:416.30px;width:51.50px;height:20.00px;background:#fff;box-shadow:inset 1px 0 0 #a8a8a8,inset -1px 0 0 #a8a8a8;"></div>
<div style="left:310.50px;top:435.00px;width:51.50px;height:2.00px;background:#217346;"></div>
<div class="t" style="left:319.80px;top:423.00px;font-size:10.500px;color:#1d6b40;font-weight:bold;letter-spacing:-0.405px;-webkit-text-stroke:0.2px #1d6b40;">Sheet1</div>
<svg style="left:388.50px;top:420.50px;" width="14" height="14" viewBox="0 0 14 14"><circle cx="7" cy="7" r="6" fill="none" stroke="#666" stroke-width="1.1"/><path d="M7 3.5V10.5M3.5 7H10.5" stroke="#555" stroke-width="1.2"/></svg>
<div style="left:570.80px;top:424.00px;width:1.00px;height:1.00px;background:#888;"></div>
<div style="left:570.80px;top:427.50px;width:1.00px;height:1.00px;background:#888;"></div>
<div style="left:570.80px;top:431.00px;width:1.00px;height:1.00px;background:#888;"></div>
<div style="left:584.00px;top:422.30px;width:11.30px;height:11.70px;background:#fff;box-shadow:inset 0 0 0 1px #c4c4c4;"></div>
<svg style="left:587.50px;top:425.00px;" width="4" height="6" viewBox="0 0 4 6"><path d="M3.5 0V6L0.5 3Z" fill="#444"/></svg>
<div style="left:595.30px;top:422.30px;width:128.70px;height:11.70px;background:#fff;box-shadow:inset 0 0 0 1px #c4c4c4;"></div>
<div style="left:724.00px;top:422.30px;width:45.40px;height:11.70px;background:#d8d8d8;"></div>
<div style="left:769.40px;top:422.30px;width:11.40px;height:11.70px;background:#fff;box-shadow:inset 0 0 0 1px #c4c4c4;"></div>
<svg style="left:773.50px;top:425.00px;" width="4" height="6" viewBox="0 0 4 6"><path d="M0.5 0V6L3.5 3Z" fill="#444"/></svg>
</div></body></html>
